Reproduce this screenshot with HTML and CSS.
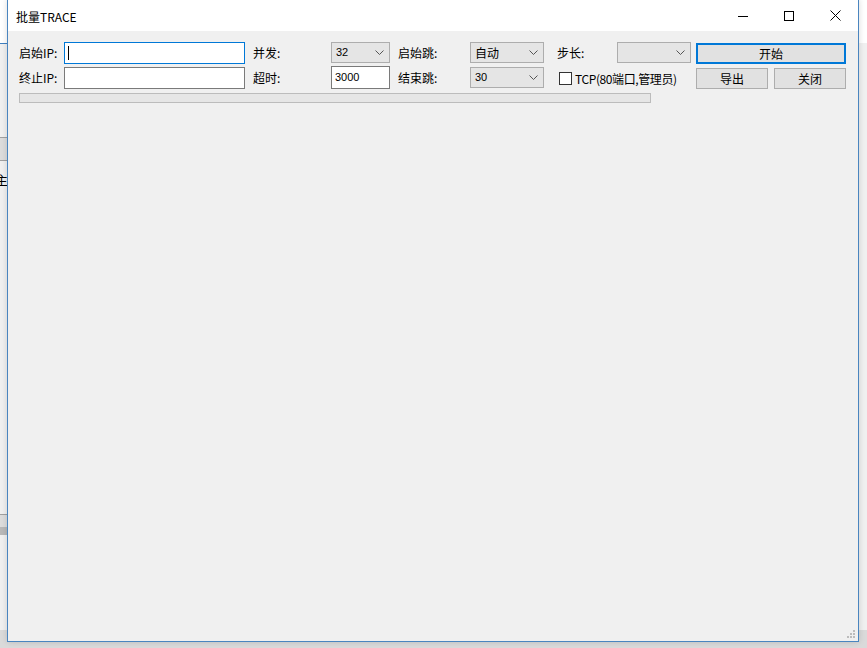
FILE: index.html
```html
<!DOCTYPE html>
<html lang="zh-CN">
<head>
<meta charset="utf-8">
<title>批量TRACE</title>
<link rel="stylesheet" href="styles.css">
</head>
<body>
<div class="desk">
  <div class="bg-line bg-l1"></div>
  <div class="bg-band bg-b1"></div>
  <div class="bg-char">主</div>
  <div class="bg-band bg-b2"></div>
  <div class="bg-bottom"></div>
</div>
<div class="window">
  <div class="titlebar">
    <div class="title">批量TRACE</div>
    <div class="caps">
      <div class="cap"><svg width="10" height="10" viewBox="0 0 10 10"><path d="M0 5.5H10" stroke="#000" stroke-width="1"/></svg></div>
      <div class="cap"><svg width="10" height="10" viewBox="0 0 10 10"><rect x="0.5" y="0.5" width="9" height="9" fill="none" stroke="#000" stroke-width="1"/></svg></div>
      <div class="cap"><svg width="11" height="11" viewBox="0 0 11 11"><path d="M0.5 0.5L10.5 10.5M10.5 0.5L0.5 10.5" stroke="#000" stroke-width="1"/></svg></div>
    </div>
  </div>
  <div class="client">
    <div class="form">
      <div class="lbl">启始IP:</div>
      <div class="edit focus"><span class="caret"></span></div>
      <div class="lbl pl8">并发:</div>
      <div class="combo"><span class="cv">32</span><svg class="arr" width="9" height="5" viewBox="0 0 9 5"><path d="M0.5 0.5L4.5 4.5L8.5 0.5" fill="none" stroke="#555" stroke-width="1"/></svg></div>
      <div class="lbl pl8">启始跳:</div>
      <div class="combo"><span class="cv cjk">自动</span><svg class="arr" width="9" height="5" viewBox="0 0 9 5"><path d="M0.5 0.5L4.5 4.5L8.5 0.5" fill="none" stroke="#555" stroke-width="1"/></svg></div>
      <div class="lbl pl13">步长:</div>
      <div class="combo"><span class="cv"></span><svg class="arr" width="9" height="5" viewBox="0 0 9 5"><path d="M0.5 0.5L4.5 4.5L8.5 0.5" fill="none" stroke="#555" stroke-width="1"/></svg></div>
      <div></div>
      <div class="btn default">开始</div>

      <div class="lbl">终止IP:</div>
      <div class="edit"></div>
      <div class="lbl pl8">超时:</div>
      <div class="edit num">3000</div>
      <div class="lbl pl8">结束跳:</div>
      <div class="combo c2"><span class="cv">30</span><svg class="arr" width="9" height="5" viewBox="0 0 9 5"><path d="M0.5 0.5L4.5 4.5L8.5 0.5" fill="none" stroke="#555" stroke-width="1"/></svg></div>
      <div class="chk"><span class="box"></span><span class="chk-t">TCP(80端口,管理员)</span></div>
      <div></div>
      <div class="btns"><div class="btn">导出</div><div class="btn">关闭</div></div>
    </div>
    <div class="progress"></div>
    <svg class="grip" width="9" height="9" viewBox="0 0 9 9">
      <rect x="6" y="0" width="2" height="2" fill="#bcbcbc"/>
      <rect x="3" y="3" width="2" height="2" fill="#bcbcbc"/>
      <rect x="6" y="3" width="2" height="2" fill="#bcbcbc"/>
      <rect x="0" y="6" width="2" height="2" fill="#bcbcbc"/>
      <rect x="3" y="6" width="2" height="2" fill="#bcbcbc"/>
      <rect x="6" y="6" width="2" height="2" fill="#bcbcbc"/>
    </svg>
  </div>
</div>
</body>
</html>
```
FILE: styles.css
```css
html, body {
  margin: 0;
  padding: 0;
}
body {
  width: 867px;
  height: 648px;
  overflow: hidden;
  position: relative;
  background: #f4f4f4;
  font-family: "Noto Sans CJK SC", "Noto Sans", sans-serif;
  font-size: 12px;
  color: #000;
}
.desk {
  position: absolute;
  inset: 0;
  background: linear-gradient(#ffffff 0, #ffffff 43px, #f0f0f0 43px);
}
.bg-line {
  position: absolute;
  left: 0;
  width: 8px;
  height: 1px;
  background: #3f7fc0;
}
.bg-l1 { top: 43px; }
.bg-band {
  position: absolute;
  left: 0;
  width: 8px;
  background: #dcdcdc;
  border-top: 1px solid #a0a0a0;
  border-bottom: 1px solid #a0a0a0;
}
.bg-b1 { top: 137px; height: 22px; }
.bg-b2 { top: 514px; height: 12px; border-bottom: 8px solid #b8b8b8; }
.bg-char {
  position: absolute;
  left: -5px;
  top: 171px;
  font-size: 13px;
  line-height: 18px;
}
.bg-bottom {
  position: absolute;
  left: 0;
  right: 0;
  top: 630px;
  bottom: 0;
  background: #dadada;
}
.window {
  position: absolute;
  left: 7px;
  top: -1px;
  width: 850px;
  height: 641px;
  border: 1px solid #4a85bf;
  background: #f0f0f0;
  display: flex;
  flex-direction: column;
  box-shadow: 0 0 6px rgba(0,0,0,0.15);
}
.titlebar {
  height: 31px;
  background: #fff;
  display: flex;
  align-items: center;
  flex: none;
}
.title {
  padding-left: 8px;
  font-size: 12px;
  line-height: 16px;
  flex: 1;
  padding-top: 2px;
}
.caps {
  display: flex;
  height: 31px;
}
.cap {
  width: 46px;
  height: 31px;
  display: flex;
  align-items: center;
  justify-content: center;
}
.client {
  flex: 1;
  position: relative;
  padding: 11px 0 0 11px;
}
.form {
  display: grid;
  grid-template-columns: 45px 181px 86px 59px 80px 74px 73px 74px 5px 150px;
  grid-template-rows: 22px 22px;
  row-gap: 3px;
  align-items: start;
}
.lbl {
  height: 22px;
  line-height: 22px;
  white-space: nowrap;
}
.pl8 { padding-left: 8px; }
.pl13 { padding-left: 13px; }
.edit {
  box-sizing: border-box;
  height: 22px;
  background: #fff;
  border: 1px solid #7a7a7a;
  position: relative;
}
.edit.focus { border-color: #0078d7; }
.caret {
  position: absolute;
  left: 3px;
  top: 3px;
  width: 1px;
  height: 14px;
  background: #000;
}
.edit.num {
  font-family: "Liberation Sans", Arial, sans-serif;
  font-size: 11px;
  line-height: 20px;
  padding-left: 3px;
  height: 23px;
  margin-top: -1px;
}
.combo {
  box-sizing: border-box;
  height: 21px;
  background: #e5e5e5;
  border: 1px solid #adadad;
  display: flex;
  align-items: center;
  justify-content: space-between;
  padding: 0 5px 0 4px;
}
.cv {
  font-family: "Liberation Sans", Arial, sans-serif;
  font-size: 11px;
  line-height: 19px;
}
.cv.cjk {
  font-family: "Noto Sans CJK SC", sans-serif;
  font-size: 12px;
}
.arr { flex: none; }
.btn {
  box-sizing: border-box;
  height: 21px;
  background: #e1e1e1;
  border: 1px solid #adadad;
  text-align: center;
  line-height: 19px;
  font-size: 12px;
}
.btn.default {
  border: 2px solid #0078d7;
  line-height: 17px;
  margin-top: 1px;
}
.btns {
  display: flex;
  gap: 6px;
  padding-top: 1px;
}
.btns .btn { width: 72px; height: 21px; }
.chk {
  grid-column: 7 / span 2;
  display: flex;
  align-items: center;
  height: 22px;
  padding-left: 15px;
  white-space: nowrap;
}
.box {
  box-sizing: border-box;
  width: 13px;
  height: 13px;
  border: 1px solid #333;
  background: #fff;
  margin-right: 3px;
  flex: none;
}
.chk-t {
  font-size: 12px;
  letter-spacing: -0.4px;
}
.progress {
  box-sizing: border-box;
  margin-top: 4px;
  width: 632px;
  height: 10px;
  background: #e6e6e6;
  border: 1px solid #bcbcbc;
}
.grip {
  position: absolute;
  right: 2px;
  bottom: 2px;
}
```
